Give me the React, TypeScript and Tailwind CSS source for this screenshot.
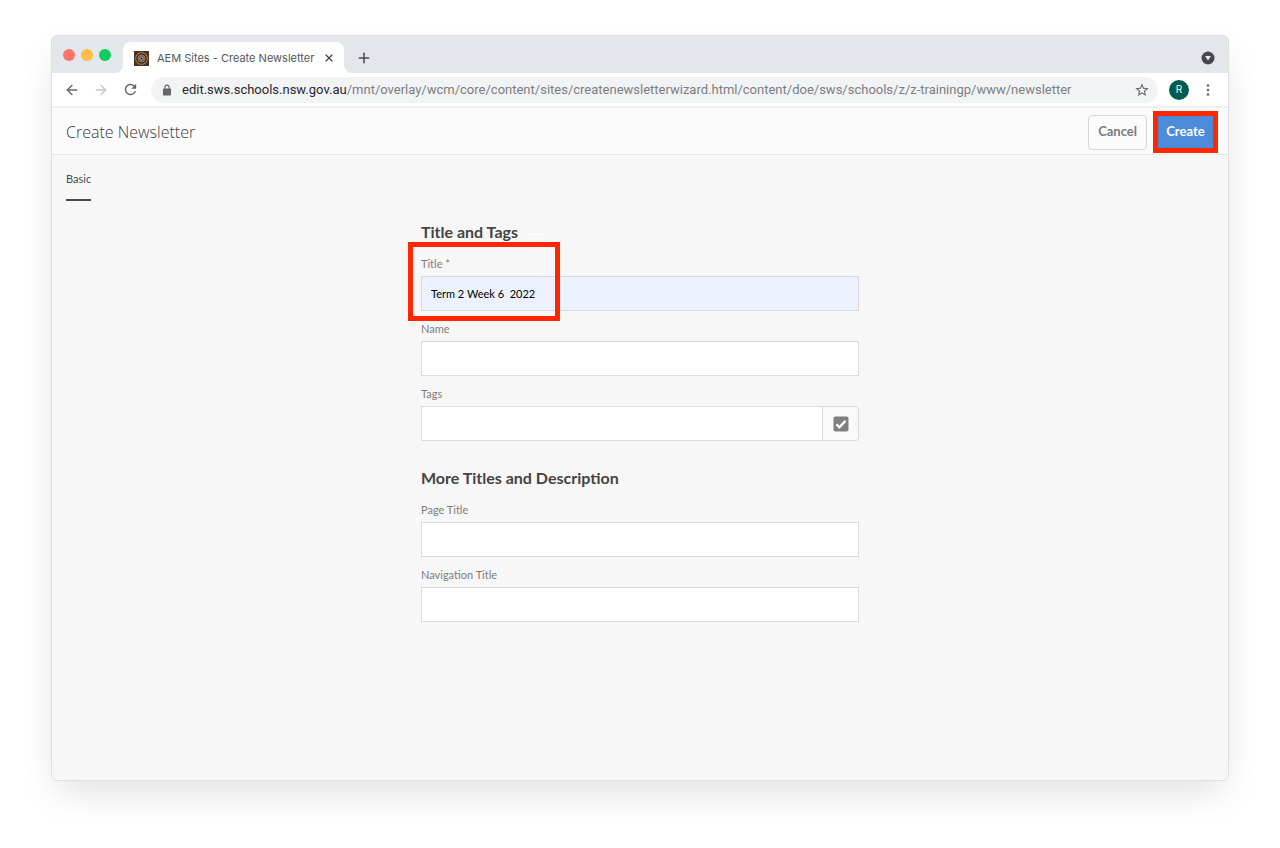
import React, { useState } from 'react'
import { ArrowLeft, ArrowRight, Plus, X } from 'lucide-react'
import { MdRefresh, MdStarBorder } from 'react-icons/md'

interface FieldProps {
  id: string
  label: string
  value: string
  onChange: (value: string) => void
  filled?: boolean
  children?: React.ReactNode
}

function Favicon() {
  return (
    <svg width="15" height="15" viewBox="0 0 15 15" aria-hidden="true">
      <rect width="15" height="15" fill="#43342b" />
      <circle cx="7.5" cy="7.5" r="5.8" fill="#2b211c" stroke="#d07a26" strokeWidth="1.1" />
      <circle cx="7.5" cy="7.5" r="3.6" fill="#6d625a" stroke="#9c8c80" strokeWidth="0.8" />
      <circle cx="7.5" cy="7.5" r="1.5" fill="#33291f" stroke="#c0b0a2" strokeWidth="0.8" />
    </svg>
  )
}

function LockIcon() {
  return (
    <svg className="shrink-0" width="12" height="12" viewBox="0 0 12 12" aria-hidden="true">
      <rect x="2" y="4.5" width="8" height="7" rx="0.8" fill="#63666a" />
      <path d="M3.9 5V3.2a2.1 2.1 0 0 1 4.2 0V5" fill="none" stroke="#63666a" strokeWidth="1.1" />
    </svg>
  )
}

function TabStrip() {
  return (
    <div className="flex h-[37px] items-end bg-[#e3e6eb] pr-[13px] pl-[11px]">
      <div className="flex h-[37px] items-center gap-[6px]">
        <span className="h-3 w-3 rounded-full bg-[#ff736a]" />
        <span className="h-3 w-3 rounded-full bg-[#febc42]" />
        <span className="h-3 w-3 rounded-full bg-[#0fcc5c]" />
      </div>
      <svg className="ml-1" width="8" height="8" viewBox="0 0 8 8" aria-hidden="true">
        <path d="M8 0v8H0a8 8 0 0 0 8-8z" fill="#fff" />
      </svg>
      <div className="flex h-[31px] w-[221px] items-center rounded-t-lg bg-white pt-px pr-[9px] pl-[11px]">
        <Favicon />
        <span className="ml-2 flex-1 text-[11px] whitespace-nowrap text-[#54575b]">AEM Sites - Create Newsletter</span>
        <button type="button" aria-label="Close tab" className="text-[#45484c]">
          <X size={12} strokeWidth={2.5} />
        </button>
      </div>
      <svg width="8" height="8" viewBox="0 0 8 8" aria-hidden="true">
        <path d="M0 0v8h8a8 8 0 0 1-8-8z" fill="#fff" />
      </svg>
      <button type="button" aria-label="New tab" className="flex h-[31px] items-center pl-1 text-[#45484c]">
        <Plus size={16} strokeWidth={2.25} />
      </button>
      <button type="button" aria-label="Search tabs" className="ml-auto flex h-[31px] items-center">
        <svg width="14" height="14" viewBox="0 0 14 14">
          <circle cx="7" cy="7" r="6.5" fill="#45484c" />
          <path d="M4 5h6L7 9.5z" fill="#e3e6eb" />
        </svg>
      </button>
    </div>
  )
}

function Toolbar() {
  return (
    <div className="flex h-[35px] items-center border-b-2 border-[#eff0f1] bg-white px-3 text-[#63666a]">
      <button type="button" aria-label="Back"><ArrowLeft size={16} strokeWidth={2} /></button>
      <button type="button" aria-label="Forward" className="ml-[13px] text-[#c6c7c9]"><ArrowRight size={16} strokeWidth={2} /></button>
      <button type="button" aria-label="Reload" className="ml-[13px]"><MdRefresh size={17} /></button>
      <div className="ml-3 flex h-[26px] min-w-0 flex-1 items-center rounded-full bg-[#f2f3f5] pr-2 pl-[10px]">
        <LockIcon />
        <span className="ml-[9px] min-w-0 flex-1 overflow-hidden font-['Roboto',sans-serif] text-[13px] whitespace-nowrap text-[#7b7e82]">
          <span className="text-[#27292c]">edit.sws.schools.nsw.gov.au</span>
          /mnt/overlay/wcm/core/content/sites/createnewsletterwizard.html/content/doe/sws/schools/z/z-trainingp/www/newsletter
        </span>
        <button type="button" aria-label="Bookmark"><MdStarBorder size={16} /></button>
      </div>
      <button type="button" aria-label="Profile" className="ml-[11px] flex h-5 w-5 items-center justify-center rounded-full bg-[#005c50] text-[10px] text-white">R</button>
      <button type="button" aria-label="Menu" className="ml-[11px]">
        <svg width="16" height="16" viewBox="0 0 16 16" fill="#63666a">
          <circle cx="8" cy="3.5" r="1.3" />
          <circle cx="8" cy="8" r="1.3" />
          <circle cx="8" cy="12.5" r="1.3" />
        </svg>
      </button>
    </div>
  )
}

function Field({ id, label, value, onChange, filled, children }: FieldProps) {
  return (
    <div>
      <label htmlFor={id} className="block pt-2 pb-[2px] text-[11px] leading-5 text-[#7c7c7c]">{label}</label>
      <div className="flex">
        <input
          id={id}
          type="text"
          value={value}
          onChange={(e) => onChange(e.target.value)}
          className={`h-[35px] min-w-0 flex-1 border border-[#dadada] px-[9px] text-[11px] text-black outline-none ${
            filled ? 'bg-[#ebf1fe]' : 'bg-white'
          }`}
        />
        {children}
      </div>
    </div>
  )
}

function App() {
  const [form, setForm] = useState({
    title: 'Term 2 Week 6  2022',
    name: '',
    tags: '',
    pageTitle: '',
    navTitle: '',
  })

  const update = (key: keyof typeof form) => (value: string) => {
    setForm(prev => ({ ...prev, [key]: value }))
  }

  return (
    <div className="flex min-h-screen flex-col bg-white px-[51px] pt-[35px] pb-[67px] font-['Inter',sans-serif]">
      <div className="flex flex-1 flex-col overflow-hidden rounded-md border border-[#dfdfdf] bg-[#f7f7f7] shadow-[0_16px_36px_-6px_rgba(0,0,0,0.13)]">
        <TabStrip />
        <Toolbar />

        <div className="flex flex-1 flex-col font-['Lato',sans-serif]">
          <header className="flex h-[47px] items-center border-b border-[#e6e6e6] bg-[#fbfbfb] pt-[2px] pr-[15px] pl-[14px]">
            <h1 className="font-['Open_Sans',sans-serif] text-[16px] font-light text-[#3b3b3b]">Create Newsletter</h1>
            <button type="button" className="ml-auto h-[35px] rounded border border-[#d6d6d6] px-[9px] text-[13px] font-bold text-[#7a7a7a]">
              Cancel
            </button>
            <button type="button" className="ml-[11px] h-8 w-[55px] bg-[#4b8bd8] text-[13px] font-bold text-white outline-5 outline-[#ff2600]">
              Create
            </button>
          </header>

          <nav className="flex px-[14px] pt-[14px]">
            <a href="#basic" className="border-b-2 border-[#4b4b4b] pb-[10px] text-[11px] leading-5 text-[#4b4b4b]">Basic</a>
          </nav>

          <form className="mx-auto w-full max-w-[438px] pt-[18px]" onSubmit={(e) => e.preventDefault()}>
            <section>
              <div className="flex items-center gap-2">
                <h2 className="pb-[2px] text-[16px] leading-[25px] font-bold text-[#444]">Title and Tags</h2>
                <span className="mt-1 h-px w-5 bg-white" />
              </div>
              <div className="relative">
                <Field id="title" label="Title *" value={form.title} onChange={update('title')} filled />
                {/* highlight around the title */}
                <div className="pointer-events-none absolute -top-1 -bottom-[10px] -left-[13px] w-[152px] border-5 border-[#ff2600]" />
              </div>
              <Field id="name" label="Name" value={form.name} onChange={update('name')} />
              <Field id="tags" label="Tags" value={form.tags} onChange={update('tags')}>
                <button
                  type="button"
                  aria-label="Browse tags"
                  className="flex w-9 items-center justify-center rounded-r border border-l-0 border-[#dadada] bg-[#fafafa]"
                >
                  <svg width="16" height="16" viewBox="0 0 16 16">
                    <rect x="0.5" y="0.5" width="15" height="15" rx="2" fill="#808080" />
                    <path d="M3.5 8.3l3 3 6-6.6" fill="none" stroke="#fff" strokeWidth="2.4" />
                  </svg>
                </button>
              </Field>
            </section>

            <section className="mt-6">
              <h2 className="pb-[2px] text-[16px] leading-[25px] font-bold text-[#444]">More Titles and Description</h2>
              <Field id="page-title" label="Page Title" value={form.pageTitle} onChange={update('pageTitle')} />
              <Field id="nav-title" label="Navigation Title" value={form.navTitle} onChange={update('navTitle')} />
            </section>
          </form>
        </div>
      </div>
    </div>
  )
}

export default App
